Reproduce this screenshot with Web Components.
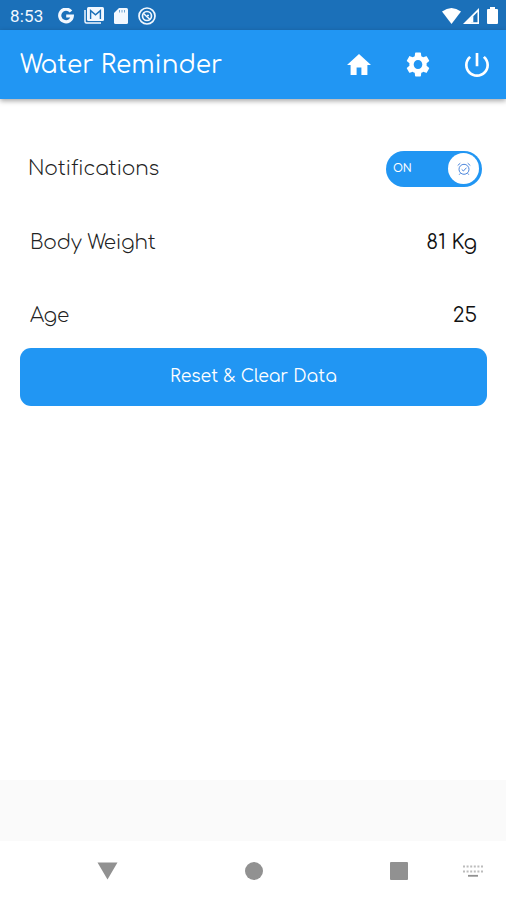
<!DOCTYPE html>
<html lang="en">
<head>
<meta charset="utf-8">
<title>Water Reminder</title>
<style>
	html, body {
		margin : 0;
		height : 100%;
		overflow : hidden;
		background : white;
	}
	body {
		font-family : Comfortaa, Quicksand, Lato, sans-serif;
		--blue : #2196f3;
	}
</style>
</head>
<body>
<water-app></water-app>
<script>

// every icon is drawn in its own view box : [viewBox, content]
const ICONS = {
	google : ['0 0 16 16', '<path d="M13 3.600A6.300 6.300 0 1 0 14.300 8H8.200" fill="none" stroke="currentColor" stroke-width="3.200"/>'],
	gmail : ['0 0 20 17', `<path d="M1 3V14.500Q1 16 2.500 16H17" fill="none" stroke="currentColor" stroke-width="1.500"/>
		<rect x="3" y="0" width="17" height="14" rx="1.500" fill="currentColor"/>
		<path d="M6.600 12V3.600L11.500 7.800L16.400 3.600V12" fill="none" stroke="#1b70b9" stroke-width="1.400"/>`],
	sdcard : ['0 0 14 16', `<path d="M5 0H12.500Q14 0 14 1.500V14.500Q14 16 12.500 16H1.500Q0 16 0 14.500V5Z" fill="currentColor"/>
		<path d="M5.500 2V4.500M8 2V4.500M10.500 2V4.500" stroke="#1b70b9" stroke-width="1" opacity=".6"/>`],
	radar : ['0 0 18 18', `<g fill="none" stroke="currentColor"><circle cx="9" cy="9" r="8" stroke-width="1.700"/>
		<circle cx="9" cy="9" r="4.500" stroke-width="1.700"/><path d="M5.500 6.500L12 12.500" stroke-width="1.600"/></g>
		<path d="M9 8.500L11 8.500" stroke="currentColor" stroke-width="1.500"/>`],
	wifi : ['0 0 19 16', '<path d="M0 3.500Q9.500 -3.500 19 3.500L9.500 16Z" fill="currentColor"/>'],
	signal : ['0 0 16 16', '<path fill="currentColor" fill-rule="evenodd" d="M16 0V16H0ZM14.500 4L8 10.500V14.300H14.500Z"/><path d="M8 14.500V10.300L10.300 8V14.500Z" fill="currentColor"/>'],
	battery : ['0 0 11 17', '<path d="M3 0H8V2H10Q11 2 11 3V16Q11 17 10 17H1Q0 17 0 16V3Q0 2 1 2H3Z" fill="currentColor"/>'],
	home : ['2 3 20 17', '<path d="M10 20v-6h4v6h5v-8h3L12 3 2 12h3v8z" fill="currentColor"/>'],
	settings : ['2 2 20 20', '<path fill="currentColor" d="M19.140 12.940c.04-.3.06-.61.06-.94 0-.32-.02-.64-.07-.94l2.030-1.580c.18-.14.23-.41.12-.61l-1.920-3.320c-.12-.22-.37-.29-.59-.22l-2.390.96c-.5-.38-1.030-.7-1.620-.94l-.36-2.540c-.04-.24-.24-.41-.48-.41h-3.840c-.24 0-.43.17-.47.41l-.36 2.540c-.59.24-1.130.57-1.620.94l-2.390-.96c-.22-.08-.47 0-.59.22L2.740 8.870c-.12.21-.08.47.12.61l2.030 1.580c-.05.3-.09.63-.09.94s.02.64.07.94l-2.030 1.580c-.18.14-.23.41-.12.61l1.920 3.320c.12.22.37.29.59.22l2.390-.96c.5.38 1.030.7 1.620.94l.36 2.540c.05.24.24.41.48.41h3.840c.24 0 .44-.17.47-.41l.36-2.540c.59-.24 1.130-.56 1.620-.94l2.390.96c.22.08.47 0 .59-.22l1.920-3.320c.12-.22.07-.47-.12-.61l-2.010-1.580zM12 15.600c-1.980 0-3.600-1.620-3.600-3.600s1.620-3.600 3.600-3.600 3.600 1.620 3.600 3.600-1.620 3.600-3.600 3.600z"/>'],
	power : ['3 3 18 18', '<path d="M13 3h-2v10h2V3zm4.830 2.170l-1.420 1.420C17.990 7.860 19 9.810 19 12c0 3.870-3.130 7-7 7s-7-3.130-7-7c0-2.190 1.010-4.140 2.580-5.420L6.170 5.170C4.230 6.820 3 9.260 3 12c0 4.970 4.030 9 9 9s9-4.030 9-9c0-2.740-1.230-5.180-3.170-6.830z" fill="currentColor"/>'],
	alarm : ['0 0 14 14', '<g fill="none" stroke="currentColor"><circle cx="7" cy="7.300" r="5"/><path d="M4.700 7.400L6.400 9L9.500 5.700M.7 3.500L3.300 1.200M13.300 3.500L10.700 1.200M3.400 11.300L2.200 12.700M10.600 11.300L11.800 12.700"/></g>'],
	back : ['0 0 21 18', '<path d="M.5 .5H20.500L10.500 17.500Z" fill="currentColor"/>'],
	circle : ['0 0 18 18', '<circle cx="9" cy="9" r="9" fill="currentColor"/>'],
	square : ['0 0 18 18', '<rect width="18" height="18" rx="1" fill="currentColor"/>'],
	keyboard : ['0 0 20 12', '<path d="M0 1.500H20M0 6.500H20" stroke="currentColor" stroke-width="2" stroke-dasharray="2 1.600" opacity=".6"/><path d="M5 10.800H15" stroke="currentColor" stroke-width="1.800"/>'],
};

function define(name, html) {
	const template = document.createElement('template');
	template.innerHTML = html;
	window.customElements.define(name, class extends HTMLElement {
		constructor() {
			super();
			this.attachShadow({mode: 'open'}).appendChild(template.content.cloneNode(true));
		}
	});
}

// <ui-icon name="…" w="…" h="…">
class UiIcon extends HTMLElement {
	constructor() {
		super();
		this.attachShadow({mode: 'open'});
	}
	connectedCallback() {
		const [box, content] = ICONS[this.getAttribute('name')];
		this.shadowRoot.innerHTML = `<style>
			:host { display : block; flex : none; }
			svg { display : block; }
		</style>
		<svg viewBox="${box}" width="${this.getAttribute('w')}" height="${this.getAttribute('h')}" preserveAspectRatio="none">${content}</svg>`;
	}
}
window.customElements.define('ui-icon', UiIcon);

define('status-bar', `<style>
	:host {
		display : flex;
		align-items : center;
		height : 30px;
		box-sizing : border-box;
		padding : 1px 8px 0 10px;
		background : #1b70b9;
		color : #f2f8ff;
		font : 400 17px/30px Roboto, sans-serif;
	}
	.left, .right { display : flex; align-items : center; }
	.time { width : 34px; letter-spacing : .2px; }
	.left { gap : 10px; margin-left : 14px; }
	.right { margin-left : auto; gap : 2px; color : white; }
	.right ui-icon:last-child { margin-left : 6px; }
</style>
<span class="time">8:53</span>
<div class="left">
	<ui-icon name="google" w="16" h="16"></ui-icon>
	<ui-icon name="gmail" w="20" h="17"></ui-icon>
	<ui-icon name="sdcard" w="14" h="16"></ui-icon>
	<ui-icon name="radar" w="18" h="18"></ui-icon>
</div>
<div class="right">
	<ui-icon name="wifi" w="19" h="16"></ui-icon>
	<ui-icon name="signal" w="16" h="16"></ui-icon>
	<ui-icon name="battery" w="11" h="17"></ui-icon>
</div>`);

define('app-bar', `<style>
	:host {
		display : flex;
		align-items : center;
		height : 69px;
		box-sizing : border-box;
		padding : 0 17px 0 20px;
		background : var(--blue);
		color : white;
		box-shadow : 0 2px 5px rgba(0, 0, 0, .35);
		z-index : 1;
	}
	h1 { margin : 0 auto 0 0; font-size : 24.7px; font-weight : 400; line-height : 68px; white-space : nowrap; }
	nav { display : flex; align-items : center; gap : 35px; }
</style>
<h1><slot></slot></h1>
<nav>
	<ui-icon name="home" w="24" h="21"></ui-icon>
	<ui-icon name="settings" w="24" h="25"></ui-icon>
	<ui-icon name="power" w="24" h="24"></ui-icon>
</nav>`);

define('setting-row', `<style>
	:host {
		display : flex;
		align-items : center;
		justify-content : space-between;
		height : 73px;
		box-sizing : border-box;
		padding : 0 29px 0 30px;
		color : #222;
		font-size : 20px;
		white-space : nowrap;
	}
	.label { font-weight : 300; letter-spacing : -.18px; }
	.value { color : #111; }
</style>
<span class="label"><slot></slot></span>
<span class="value"><slot name="value"></slot></span>`);

define('toggle-switch', `<style>
	:host {
		display : flex;
		align-items : center;
		justify-content : space-between;
		width : 96px;
		height : 36px;
		box-sizing : border-box;
		padding : 0 3px 0 7px;
		border-radius : 18px;
		background : var(--blue);
		color : white;
		font-size : 10.8px;
		font-weight : 600;
		letter-spacing : -.2px;
	}
	.knob {
		display : grid;
		place-items : center;
		width : 31px;
		height : 31px;
		border-radius : 50%;
		background : white;
		color : #4b86dc;
	}
</style>
<span><slot></slot></span>
<div class="knob"><ui-icon name="alarm" w="14" h="14"></ui-icon></div>`);

define('wide-button', `<style>
	:host { display : block; margin : 0 19px 0 20px; }
	button {
		display : block;
		width : 100%;
		height : 58px;
		padding : 0 0 2px;
		border : none;
		border-radius : 11px;
		background : var(--blue);
		color : white;
		font : inherit;
		font-size : 17.300px;
	}
</style>
<button><slot></slot></button>`);

define('nav-bar', `<style>
	:host {
		display : flex;
		align-items : center;
		gap : 127px;
		height : 59px;
		box-sizing : border-box;
		padding-left : 97px;
		background : white;
		color : #919191;
	}
	.end { display : flex; align-items : center; gap : 55px; }
</style>
<ui-icon name="back" w="21" h="18"></ui-icon>
<ui-icon name="circle" w="18" h="18"></ui-icon>
<div class="end">
	<ui-icon name="square" w="18" h="18"></ui-icon>
	<ui-icon name="keyboard" w="20" h="12"></ui-icon>
</div>`);

define('water-app', `<style>
	:host { display : flex; flex-direction : column; height : 900px; }
	main { height : 681px; box-sizing : border-box; padding-top : 33px; background : white; }
	.spacer { flex : 1; background : #fafafa; }
	.notifications { height : 74px; padding : 0 24px 1px 28px; }
	.age { height : 69px; padding-top : 4px; }
</style>
<status-bar></status-bar>
<app-bar>Water Reminder</app-bar>
<main>
	<setting-row class="notifications">Notifications<toggle-switch slot="value">ON</toggle-switch></setting-row>
	<setting-row>Body Weight<span slot="value">81 Kg</span></setting-row>
	<setting-row class="age">Age<span slot="value">25</span></setting-row>
	<wide-button>Reset &amp; Clear Data</wide-button>
</main>
<div class="spacer"></div>
<nav-bar></nav-bar>`);

</script>
</body>
</html>
